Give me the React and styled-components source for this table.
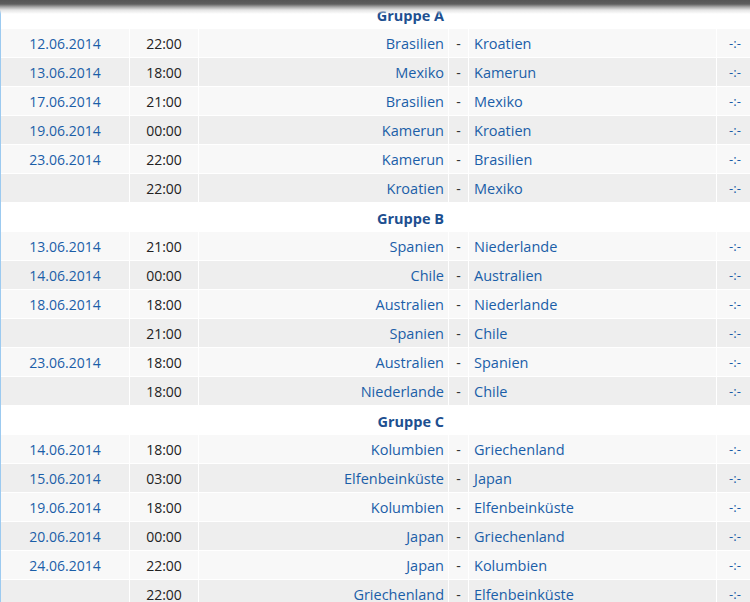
import React from 'react'
import styled, { createGlobalStyle } from 'styled-components'

const Global = createGlobalStyle`
  html, body { margin: 0; padding: 0; background: #fff; overflow: hidden; }
  body { font-family: "Open Sans", "Liberation Sans", sans-serif; font-size: 14px; }
`

const groups = [
  {
    name: 'Gruppe A',
    matches: [
      ['12.06.2014', '22:00', 'Brasilien', 'Kroatien'],
      ['13.06.2014', '18:00', 'Mexiko', 'Kamerun'],
      ['17.06.2014', '21:00', 'Brasilien', 'Mexiko'],
      ['19.06.2014', '00:00', 'Kamerun', 'Kroatien'],
      ['23.06.2014', '22:00', 'Kamerun', 'Brasilien'],
      ['', '22:00', 'Kroatien', 'Mexiko'],
    ],
  },
  {
    name: 'Gruppe B',
    matches: [
      ['13.06.2014', '21:00', 'Spanien', 'Niederlande'],
      ['14.06.2014', '00:00', 'Chile', 'Australien'],
      ['18.06.2014', '18:00', 'Australien', 'Niederlande'],
      ['', '21:00', 'Spanien', 'Chile'],
      ['23.06.2014', '18:00', 'Australien', 'Spanien'],
      ['', '18:00', 'Niederlande', 'Chile'],
    ],
  },
  {
    name: 'Gruppe C',
    matches: [
      ['14.06.2014', '18:00', 'Kolumbien', 'Griechenland'],
      ['15.06.2014', '03:00', 'Elfenbeinküste', 'Japan'],
      ['19.06.2014', '18:00', 'Kolumbien', 'Elfenbeinküste'],
      ['20.06.2014', '00:00', 'Japan', 'Griechenland'],
      ['24.06.2014', '22:00', 'Japan', 'Kolumbien'],
      ['', '22:00', 'Griechenland', 'Elfenbeinküste'],
    ],
  },
]

const Page = styled.div`
  position: relative;
  border-left: 1px solid #9ccaf0;
  min-height: 602px;
`

const TopShadow = styled.div`
  position: absolute;
  top: 0;
  left: -1px;
  right: 0;
  height: 14px;
  background: linear-gradient(#555 0, #5e5e5e 4px, #a8a8a8 7px, #e4e4e4 10px, rgba(255,255,255,0) 14px);
  z-index: 2;
`

const Table = styled.div`
  display: grid;
  grid-template-columns: 128px 68px 249px 19px 247px 1fr;
  grid-auto-rows: 28px;
  gap: 1px;
  background: #fff;
`

const Cell = styled.div`
  display: flex;
  align-items: center;
  background: ${p => (p.$alt ? '#eeeeee' : '#f8f8f8')};
  color: #1b5ea8;
  white-space: nowrap;
  justify-content: ${p => p.$align || 'center'};
  padding: ${p => p.$pad || '0'};
`

const Team = styled(Cell)`
  font-size: 14.5px;
`

const Time = styled(Cell)`
  color: #222;
`

const Dash = styled(Cell)`
  color: #333;
`

const Score = styled(Cell)`
  padding-left: 3px;
  font-size: 13px;
`

const GroupTitle = styled.div`
  grid-column: 1 / 4;
  display: flex;
  align-items: center;
  justify-content: flex-end;
  padding: 3px 4px 0 0;
  color: #1d4f90;
  font-weight: 700;
  font-size: 14.5px;
  background: #fff;
`

const GroupFill = styled.div`
  grid-column: 4 / 7;
  background: #fff;
`

export default function App() {
  return (
    <Page>
      <Global />
      <TopShadow />
      <Table>
        {groups.map(g => (
          <React.Fragment key={g.name}>
            <GroupTitle>{g.name}</GroupTitle>
            <GroupFill />
            {g.matches.map((m, i) => {
              const alt = i % 2 === 1
              return (
                <React.Fragment key={i}>
                  <Cell $alt={alt}>{m[0]}</Cell>
                  <Time $alt={alt}>{m[1]}</Time>
                  <Team $alt={alt} $align="flex-end" $pad="0 4px 0 0">{m[2]}</Team>
                  <Dash $alt={alt}>-</Dash>
                  <Team $alt={alt} $align="flex-start" $pad="0 0 0 5px">{m[3]}</Team>
                  <Score $alt={alt}>-:-</Score>
                </React.Fragment>
              )
            })}
          </React.Fragment>
        ))}
      </Table>
    </Page>
  )
}
